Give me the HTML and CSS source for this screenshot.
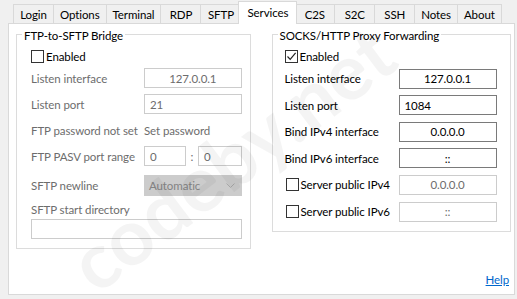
FILE: index.html
```html
<!DOCTYPE html>
<html>
  <head>
    <title>Services</title>
    <link rel="stylesheet" href="styles.css">
  </head>
  <body>
    <div class="window">
      <div class="tabs">
        <span class="tab">Login</span>
        <span class="tab">Options</span>
        <span class="tab">Terminal</span>
        <span class="tab">RDP</span>
        <span class="tab">SFTP</span>
        <span class="tab active">Services</span>
        <span class="tab">C2S</span>
        <span class="tab">S2C</span>
        <span class="tab">SSH</span>
        <span class="tab">Notes</span>
        <span class="tab">About</span>
      </div>
      <div class="page">
        <div class="groups">
          <fieldset class="group group-left">
            <legend>FTP-to-SFTP Bridge</legend>
            <div class="stack">
              <label class="check-row"><span class="box"></span>Enabled</label>
              <div class="row off">
                <span class="label">Listen interface</span>
                <span class="input center">127.0.0.1</span>
              </div>
              <div class="row off">
                <span class="label">Listen port</span>
                <span class="input">21</span>
              </div>
              <div class="row off">
                <span class="label">FTP password not set</span>
                <span class="plain">Set password</span>
              </div>
              <div class="row off">
                <span class="label">FTP PASV port range</span>
                <span class="range">
                  <span class="input short">0</span>
                  <span class="colon">:</span>
                  <span class="input short">0</span>
                </span>
              </div>
              <div class="row off row-select">
                <span class="label">SFTP newline</span>
                <span class="select">Automatic
                  <svg width="9" height="6" viewBox="0 0 9 6"><path d="M0.5 0.5 L4.5 4.5 L8.5 0.5" fill="none" stroke="#a8a8a8" stroke-width="1"/></svg>
                </span>
              </div>
              <div class="row off row-caption">
                <span class="label">SFTP start directory</span>
              </div>
              <div class="row off row-wide">
                <span class="input wide"></span>
              </div>
            </div>
          </fieldset>

          <fieldset class="group group-right">
            <legend>SOCKS/HTTP Proxy Forwarding</legend>
            <div class="stack stack-right">
              <label class="check-row">
                <span class="box">
                  <svg width="11" height="11" viewBox="0 0 11 11"><path d="M1.5 5.5 L4.2 8.3 L9.6 1.8" fill="none" stroke="#222" stroke-width="1.2"/></svg>
                </span>Enabled
              </label>
              <div class="row">
                <span class="label">Listen interface</span>
                <span class="input center">127.0.0.1</span>
              </div>
              <div class="row">
                <span class="label">Listen port</span>
                <span class="input">1084</span>
              </div>
              <div class="row">
                <span class="label">Bind IPv4 interface</span>
                <span class="input center">0.0.0.0</span>
              </div>
              <div class="row">
                <span class="label">Bind IPv6 interface</span>
                <span class="input center">::</span>
              </div>
              <div class="row">
                <label class="label check-label"><span class="box"></span>Server public IPv4</label>
                <span class="input center disabled">0.0.0.0</span>
              </div>
              <div class="row">
                <label class="label check-label"><span class="box"></span>Server public IPv6</label>
                <span class="input center disabled">::</span>
              </div>
            </div>
          </fieldset>
        </div>
        <a class="help" href="#">Help</a>
      </div>
      <div class="watermark">codeby.net</div>
    </div>
  </body>
</html>
```

FILE: styles.css
```css
body {
  margin: 0;
  background: #f0f0f0;
  font-family: Lato, Roboto, sans-serif;
  font-size: 11.5px;
  letter-spacing: -0.1px;
  color: #000;
}
.window {
  position: relative;
  width: 517px;
  height: 299px;
  overflow: hidden;
}
.tabs {
  display: flex;
  height: 19px;
  margin-left: 13px;
  padding-top: 4px;
}
.tab {
  display: flex;
  align-items: center;
  justify-content: center;
  min-width: 41px;
  padding: 0 6px;
  height: 19px;
  box-sizing: border-box;
  border: 1px solid #d9d9d9;
  border-bottom: none;
  margin-left: -1px;
  background: #f0f0f0;
}
.tab:first-child {
  margin-left: 0;
}
.tab.active {
  position: relative;
  z-index: 2;
  background: #fff;
  height: 23px;
  margin-top: -3px;
  margin-left: -3px;
  margin-right: -2px;
  padding: 0 8px 2px;
}
.page {
  display: flex;
  flex-direction: column;
  margin-left: 8px;
  width: 507px;
  height: 272px;
  box-sizing: border-box;
  border: 1px solid #d9d9d9;
  background: #fff;
  padding: 3px 3px 4px 7px;
}
.groups {
  display: flex;
  gap: 21px;
  align-items: flex-start;
}
.group {
  margin: 0;
  min-width: 0;
  border: 1px solid #dcdcdc;
  box-sizing: border-box;
  padding: 8px 8px 9px 14px;
}
.group legend {
  position: relative;
  top: 2px;
  padding: 0 2px;
  margin-left: -9px;
  line-height: 14px;
}
.group-left {
  width: 235px;
  height: 222px;
}
.group-right {
  width: 240px;
  height: 205px;
  padding-left: 12px;
}
.group-right legend {
  margin-left: -7px;
}
.stack {
  display: flex;
  flex-direction: column;
  gap: 6px;
}
.stack-right {
  gap: 6.6px;
}
.check-row {
  display: flex;
  align-items: center;
  height: 15px;
  margin-bottom: -2px;
}
.box {
  display: inline-flex;
  align-items: center;
  justify-content: center;
  width: 13px;
  height: 13px;
  box-sizing: border-box;
  border: 1px solid #333;
  background: #fff;
  margin-right: 2px;
}
.row {
  display: flex;
  align-items: center;
  height: 20px;
}
.row .label {
  width: 113px;
  flex: none;
  white-space: nowrap;
}
.stack-right .row .label {
  width: 114px;
}
.check-label {
  display: flex;
  align-items: center;
  margin-left: 1px;
}
.stack-right .row .check-label {
  width: 113px;
}
.off {
  color: #6d6d6d;
}
.input {
  display: flex;
  align-items: center;
  width: 98px;
  height: 20px;
  box-sizing: border-box;
  border: 1px solid #7a7a7a;
  padding: 0 5px;
  background: #fff;
}
.off .input,
.input.disabled {
  border-color: #cccccc;
  color: #6d6d6d;
}
.input.center {
  justify-content: center;
}
.range {
  display: flex;
  align-items: center;
  width: 98px;
}
.input.short {
  width: 42px;
}
.colon {
  width: 12px;
  text-align: center;
}
.input.short:last-child {
  width: 44px;
}
.plain {
  white-space: nowrap;
}
.row-select {
  margin-top: 3px;
  height: 21px;
}
.select {
  display: flex;
  align-items: center;
  justify-content: space-between;
  width: 98px;
  height: 21px;
  box-sizing: border-box;
  background: #cccccc;
  border: 1px solid #cccccc;
  color: #838383;
  padding: 0 6px 0 4px;
}
.row-caption {
  height: 14px;
}
.row-wide {
  margin-top: -3px;
}
.input.wide {
  width: 211px;
}
.help {
  margin-top: auto;
  align-self: flex-end;
  color: #0066cc;
  margin-right: 2px;
  margin-bottom: 3px;
  line-height: 14px;
}
.watermark {
  position: absolute;
  left: 40px;
  top: 110px;
  font-size: 78px;
  font-weight: bold;
  letter-spacing: 0;
  color: rgba(0, 0, 0, 0.045);
  transform: rotate(-37deg);
  white-space: nowrap;
  pointer-events: none;
}
```
